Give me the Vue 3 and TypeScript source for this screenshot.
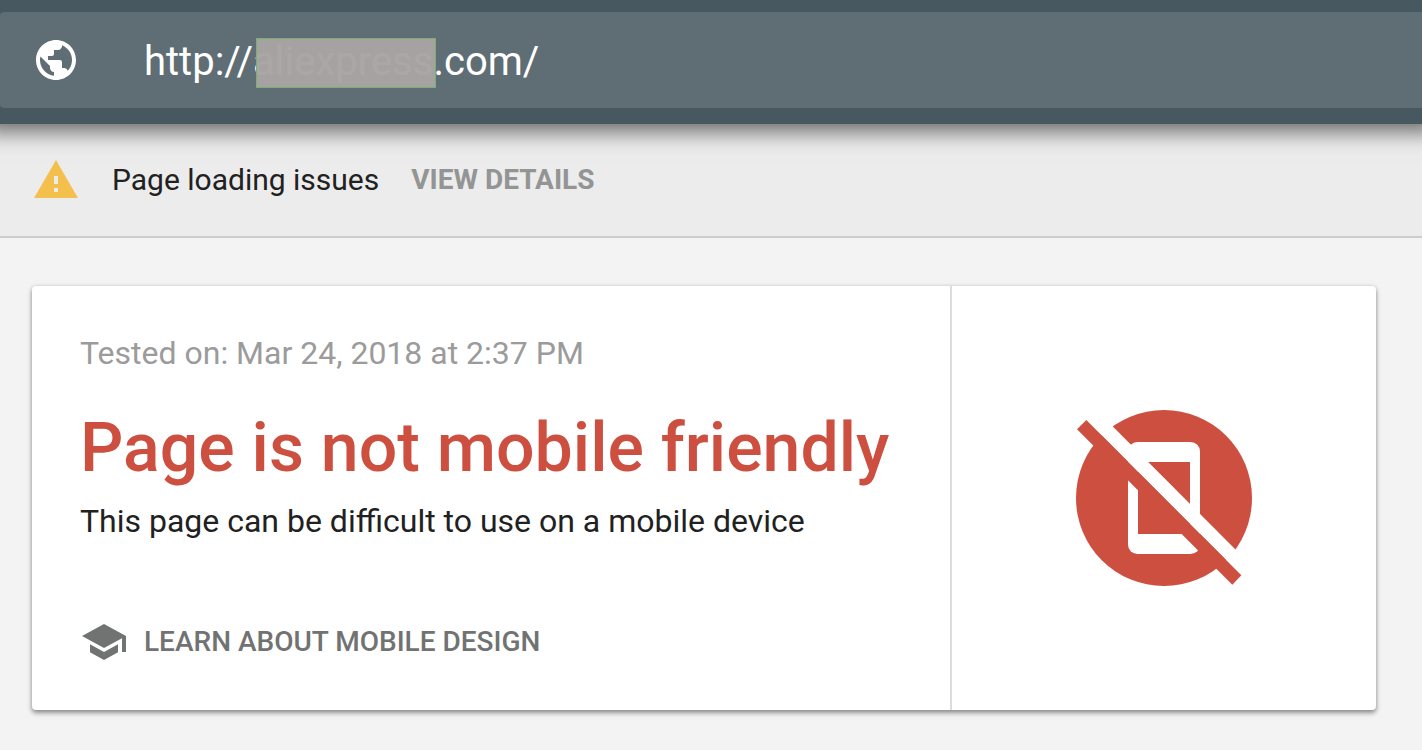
<script setup lang="ts">
import { ref } from 'vue'

const url = ref('http://aliexpress.com/')
const testedOn = 'Mar 24, 2018 at 2:37 PM'
</script>

<template>
  <div class="page">
    <header class="topbar">
      <div class="field">
        <svg class="icon" viewBox="0 0 24 24" aria-hidden="true">
          <path d="M12 2C6.48 2 2 6.48 2 12s4.48 10 10 10 10-4.48 10-10S17.52 2 12 2zm-1 17.93c-3.95-.49-7-3.85-7-7.93 0-.62.08-1.21.21-1.79L9 15v1c0 1.1.9 2 2 2v1.930zm6.900-2.540c-.26-.81-1-1.390-1.900-1.390h-1v-3c0-.55-.45-1-1-1H8v-2h2c.55 0 1-.45 1-1V7h2c1.100 0 2-.9 2-2v-.41c2.930 1.190 5 4.060 5 7.410 0 2.080-.8 3.970-2.100 5.390z" />
        </svg>
        <div class="url">
          <input v-model="url" type="text" aria-label="Page URL" spellcheck="false" />
          <span class="mask"></span>
        </div>
      </div>
    </header>

    <section class="notice">
      <svg class="icon warning" viewBox="0 0 24 24" aria-hidden="true">
        <path d="M1 21h22L12 2 1 21zm12-3h-2v-2h2v2zm0-4h-2v-4h2v4z" />
      </svg>
      <span class="message">Page loading issues</span>
      <button type="button" class="details">VIEW DETAILS</button>
    </section>

    <main class="card">
      <div class="result">
        <p class="tested">Tested on: {{ testedOn }}</p>
        <h1>Page is not mobile friendly</h1>
        <p class="summary">This page can be difficult to use on a mobile device</p>
        <a href="#" class="learn">
          <svg class="icon" viewBox="0 0 24 24" aria-hidden="true">
            <path d="M5 13.180v4L12 21l7-3.820v-4L12 17l-7-3.820zM12 3L1 9l11 6 9-4.910V17h2V9L12 3z" />
          </svg>
          <span>LEARN ABOUT MOBILE DESIGN</span>
        </a>
      </div>
      <div class="verdict">
        <svg viewBox="-3 9 630 630" role="img" aria-label="Not mobile friendly">
          <circle class="red" cx="312" cy="324" r="264" />
          <rect class="white" x="204" y="156" width="216" height="336" rx="28" />
          <path class="red" d="M234 216h156v216H234z" />
          <path class="white" d="M79 90L109 60L575 527L544 556z" />
          <path class="red" d="M79 90L544 556L517 584L51 118z" />
        </svg>
      </div>
    </main>
  </div>
</template>

<style>
body {
  margin: 0;
  background: #f3f3f3;
}
</style>

<style scoped>
.page {
  overflow: hidden;
  font-family: Roboto, "Liberation Sans", sans-serif;
  color: #212121;
}

.topbar {
  position: relative;
  padding: 12px 0 16px;
  background: #485860;
  box-shadow: 0 -8px 20px 16px rgba(0, 0, 0, 0.55);
}

.field {
  display: flex;
  align-items: center;
  gap: 64px;
  height: 96px;
  padding: 0 32px;
  border-radius: 4px 0 0 4px;
  background: #5f6d74;
}

.icon {
  display: block;
  flex: none;
  width: 48px;
  height: 48px;
  fill: #fff;
}

.url {
  position: relative;
  flex: 1;
}

.url input {
  display: block;
  width: 100%;
  height: 48px;
  padding: 4px 0 0;
  border: 0;
  outline: 0;
  background: transparent;
  color: #fff;
  font: 400 40px/48px Roboto, "Liberation Sans", sans-serif;
}

.mask {
  position: absolute;
  top: 4px;
  left: 112px;
  box-sizing: border-box;
  width: 180px;
  height: 50px;
  border: 1px solid #78b074;
  background: rgba(168, 164, 163, 0.97);
  background-clip: padding-box;
}

.notice {
  display: flex;
  align-items: center;
  height: 114px;
  box-sizing: border-box;
  padding: 0 32px;
  border-bottom: 2px solid #cdcdcd;
  background: #ececec;
}

.warning {
  fill: #f3c04e;
}

.message {
  margin: 0 32px;
  font-size: 30px;
  line-height: 40px;
}

.details {
  padding: 0;
  border: 0;
  background: none;
  color: #939494;
  font: 700 28px/40px Roboto, "Liberation Sans", sans-serif;
}

.card {
  display: flex;
  margin: 48px 46px 40px 32px;
  border-radius: 4px;
  background: #fff;
  box-shadow: 0 3px 5px rgba(0, 0, 0, 0.4), 0 0 4px rgba(0, 0, 0, 0.12);
}

.result {
  flex: 1;
  padding: 48px 48px 44px;
}

.result p,
.result h1 {
  margin: 0;
}

.tested {
  color: #9b9b9b;
  font-size: 32px;
  line-height: 38px;
}

.result h1 {
  padding: 36px 0 12px;
  color: #cc4f40;
  font-size: 68px;
  font-weight: 500;
  line-height: 80px;
}

.summary {
  font-size: 32px;
  line-height: 42px;
}

.learn {
  display: flex;
  align-items: center;
  gap: 16px;
  margin-top: 76px;
  color: #717372;
  font-size: 28px;
  font-weight: 500;
  line-height: 48px;
  text-decoration: none;
}

.learn .icon {
  fill: #717372;
}

.verdict {
  display: flex;
  align-items: center;
  justify-content: center;
  width: 424px;
  border-left: 2px solid #dcdcdc;
}

.verdict svg {
  width: 210px;
  height: 210px;
}

.red {
  fill: #cc4f40;
}

.white {
  fill: #fff;
}
</style>
